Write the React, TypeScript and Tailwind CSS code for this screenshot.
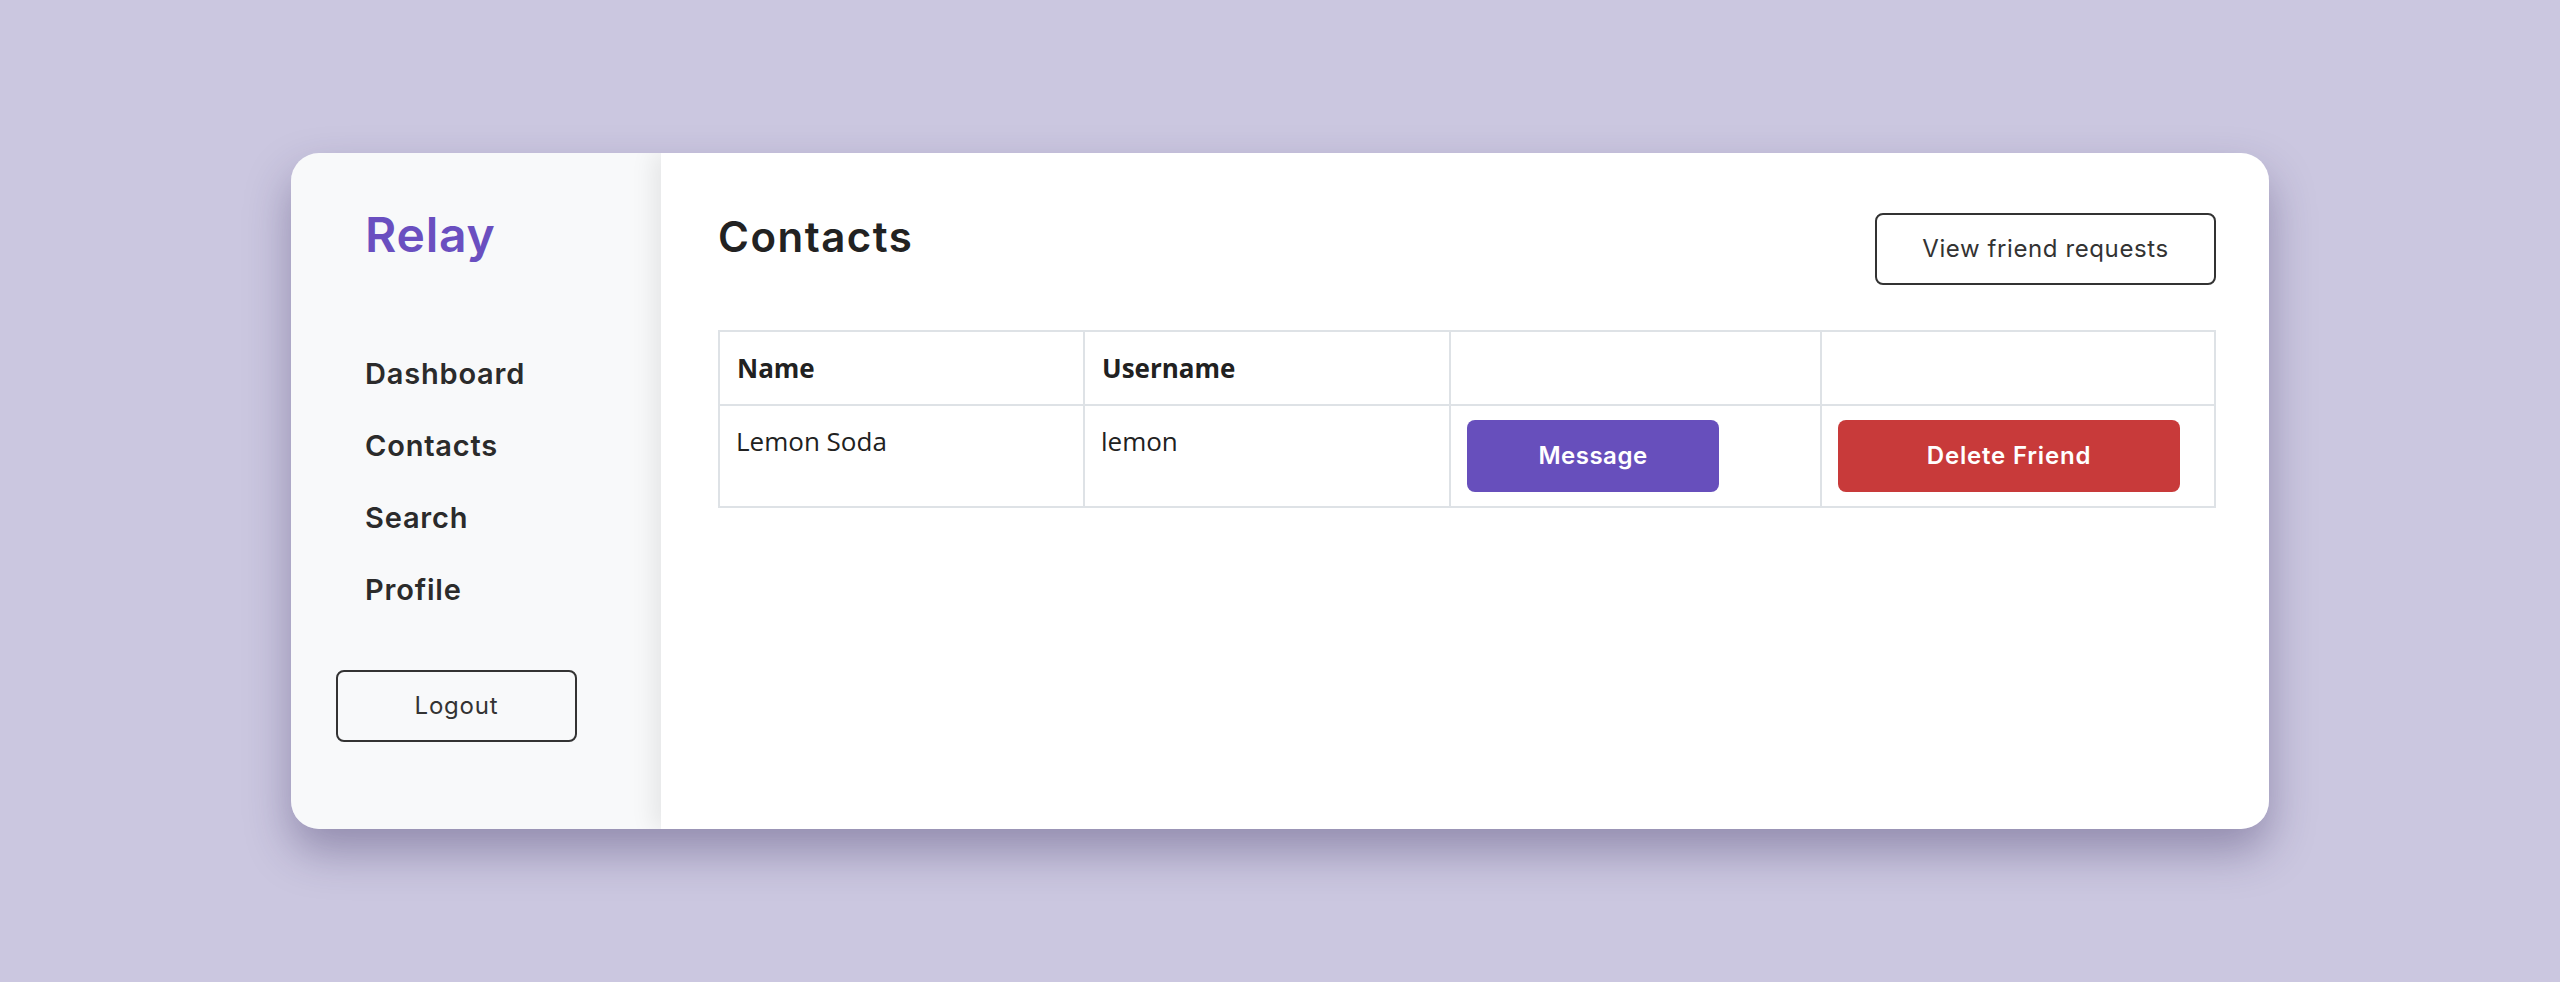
import React from 'react';

const navItems = ['Dashboard', 'Contacts', 'Search', 'Profile'];

const contacts = [{ name: 'Lemon Soda', username: 'lemon' }];

const heading = { fontFamily: 'Inter, "Noto Sans", sans-serif' };
const body = { fontFamily: '"Open Sans", "Noto Sans", sans-serif' };

export default function App() {
  return (
    <div className="min-h-screen w-full bg-[#cbc7e0] flex items-center justify-center" style={heading}>
      <div className="flex w-[1978px] h-[676px] rounded-[28px] overflow-hidden shadow-[0_22px_45px_rgba(40,30,80,0.35)]">
        {/* sidebar */}
        <aside className="w-[370px] shrink-0 bg-[#f8f9fa] pt-[53px] pl-[45px] flex flex-col">
          <h1 className="pl-[29px] text-[48px] leading-[1.2] font-semibold text-[#6a4fc0] tracking-[0.8px]">Relay</h1>
          <nav className="pl-[29px] mt-[89px] flex flex-col gap-[30px]">
            {navItems.map((item) => (
              <a key={item} className="text-[29px] leading-[42px] font-semibold text-[#2b2b2b] tracking-[0.8px]">
                {item}
              </a>
            ))}
          </nav>
          <button className="mt-[59px] w-[241px] h-[72px] rounded-[8px] border-2 border-[#333] text-[24px] text-[#333] tracking-[0.8px] bg-transparent">
            Logout
          </button>
        </aside>

        {/* main */}
        <main className="relative z-10 flex-1 bg-white pt-[60px] pl-[57px] pr-[53px] shadow-[-8px_0_22px_rgba(0,0,0,0.08)]">
          <div className="flex items-start justify-between">
            <h2 className="text-[42px] leading-[1.15] font-semibold text-[#222] tracking-[1.5px]">Contacts</h2>
            <button className="w-[341px] h-[72px] rounded-[8px] border-2 border-[#333] text-[24px] text-[#333] tracking-[0.6px] bg-white">
              View friend requests
            </button>
          </div>

          <table className="mt-[45px] w-full border-collapse border-2 border-[#dee2e6]" style={body}>
            <thead>
              <tr className="h-[74px]">
                <th className="border-2 border-[#dee2e6] px-[17px] text-left text-[26px] font-bold text-[#212121] w-[365px]">Name</th>
                <th className="border-2 border-[#dee2e6] px-[17px] text-left text-[26px] font-bold text-[#212121] w-[366px]">Username</th>
                <th className="border-2 border-[#dee2e6] w-[371px]"></th>
                <th className="border-2 border-[#dee2e6]"></th>
              </tr>
            </thead>
            <tbody>
              {contacts.map((c) => (
                <tr key={c.username}>
                  <td className="border-2 border-[#dee2e6] p-[16px] align-top text-[26px] leading-[1.5] text-[#212121]">{c.name}</td>
                  <td className="border-2 border-[#dee2e6] p-[16px] align-top text-[26px] leading-[1.5] text-[#212121]">{c.username}</td>
                  <td className="border-2 border-[#dee2e6] px-[16px] py-[14px] align-top">
                    <button className="w-[252px] h-[72px] rounded-[8px] bg-[#674fbc] text-white text-[24px] font-semibold tracking-[0.5px]" style={heading}>
                      Message
                    </button>
                  </td>
                  <td className="border-2 border-[#dee2e6] px-[16px] py-[14px] align-top">
                    <button className="w-[342px] h-[72px] rounded-[8px] bg-[#c83a3a] text-white text-[24px] font-semibold tracking-[0.8px]" style={heading}>
                      Delete Friend
                    </button>
                  </td>
                </tr>
              ))}
            </tbody>
          </table>
        </main>
      </div>
    </div>
  );
}
